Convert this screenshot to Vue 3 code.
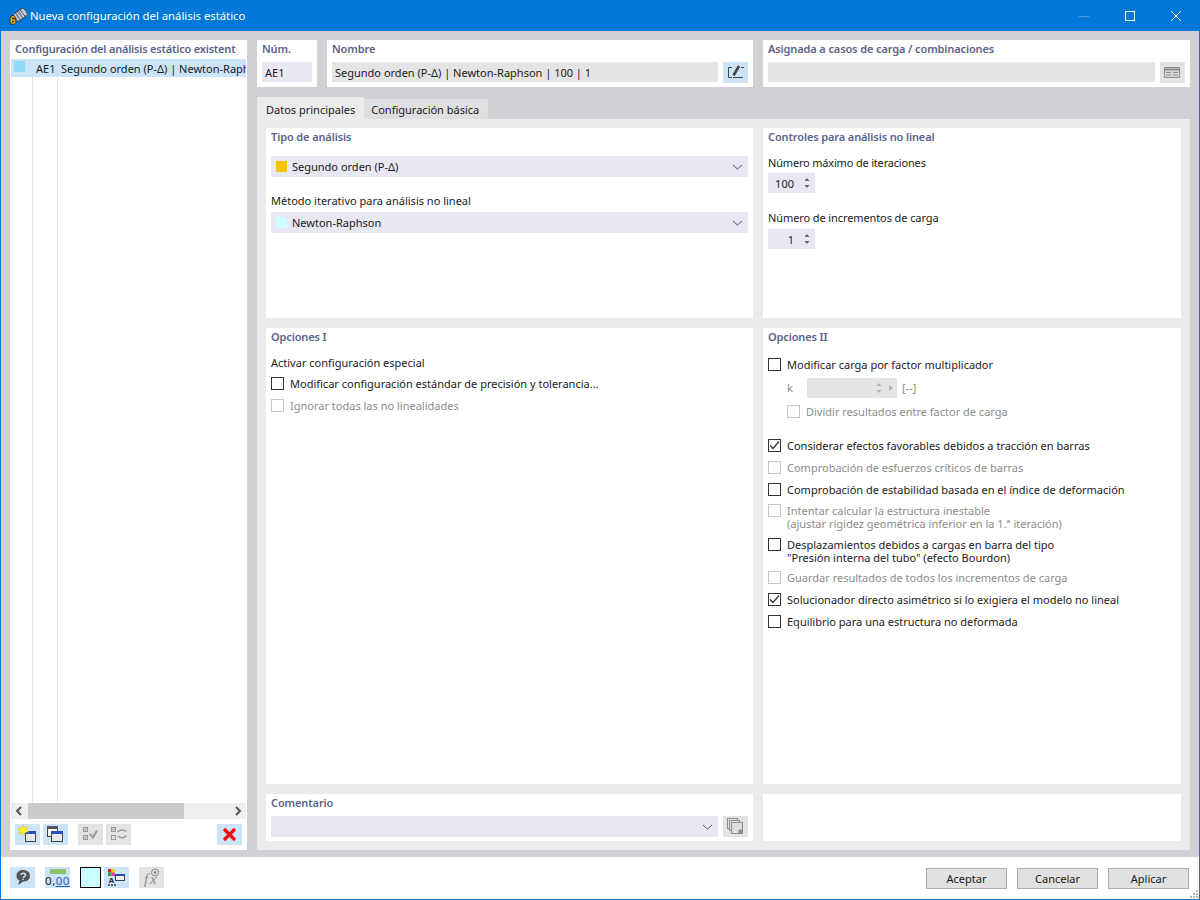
<template>
  <div class="window">
    <div class="titlebar">
      <svg class="app-icon" width="18" height="18" viewBox="0 0 18 18">
        <g transform="rotate(-35 11 8)">
          <rect x="4" y="3.500" width="14" height="9" rx="3.500" fill="#7f8694" stroke="#2f3340" stroke-width=".8" />
          <path d="M7 4V12M10 4V12M13 4V12" stroke="#dfe3ea" stroke-width="1" />
          <ellipse cx="16" cy="8" rx="2" ry="4.500" fill="#c9ced8" stroke="#2f3340" stroke-width=".6" />
        </g>
        <text class="six" x="1" y="16.500">6</text>
      </svg>
      <span class="title-text">Nueva configuración del análisis estático</span>
      <div class="win-btns">
        <svg width="12" height="12" viewBox="0 0 12 12"><path d="M1 6.500H11" stroke="#4d9fe0" /></svg>
        <svg width="12" height="12" viewBox="0 0 12 12"><rect x="1.500" y="1.500" width="9" height="9" fill="none" stroke="#fff" /></svg>
        <svg width="12" height="12" viewBox="0 0 12 12"><path d="M1 1L11 11M11 1L1 11" stroke="#fff" /></svg>
      </div>
    </div>

    <div class="body">
      <aside class="side">
        <div class="side-head">Configuración del análisis estático existent</div>
        <div class="tree">
          <div class="tree-row">
            <span class="tree-swatch"></span>
            <span class="tree-id">AE1</span>
            <span class="tree-name">Segundo orden (P-Δ) | Newton-Raph</span>
          </div>
        </div>
        <div class="scrollbar">
          <svg width="17" height="16" viewBox="0 0 17 16"><path d="M10 4L6 8L10 12" fill="none" stroke="#555" stroke-width="2" /></svg>
          <div class="scroll-track"><div class="scroll-thumb"></div></div>
          <svg width="17" height="16" viewBox="0 0 17 16"><path d="M7 4L11 8L7 12" fill="none" stroke="#555" stroke-width="2" /></svg>
        </div>
        <div class="side-tools">
          <button class="tool on">
            <svg width="25" height="21" viewBox="0 0 25 21">
              <rect x="10.500" y="7.500" width="10" height="10" fill="#e8e8e8" stroke="#444" />
              <rect x="10" y="7" width="11" height="3" fill="#2c4fc0" />
              <path d="M8 0.500L9.300 3.700L12.800 2.500L11 5.800L13.500 8L10 8.300L9 11.500L7.200 8.800L3.500 10L5 6.700L2.500 4.500L6 4.300Z" fill="#f6ee2c" stroke="#d6c400" stroke-width=".5" />
            </svg>
          </button>
          <button class="tool on">
            <svg width="25" height="21" viewBox="0 0 25 21">
              <rect x="4.500" y="2.500" width="10" height="10" fill="#f2f2f2" stroke="#444" />
              <rect x="4" y="2" width="11" height="3" fill="#555" />
              <rect x="8.500" y="7.500" width="11" height="10" fill="#e8e8e8" stroke="#444" />
              <rect x="8" y="7" width="12" height="3" fill="#2c4fc0" />
            </svg>
          </button>
          <button class="tool off gap-left">
            <svg width="25" height="21" viewBox="0 0 25 21" fill="none" stroke="#9a9a9a">
              <rect x="5.500" y="3.500" width="4" height="4" />
              <rect x="5.500" y="11.500" width="4" height="4" />
              <path d="M6 5L7.500 6.500L10 3M6 13L7.500 14.500L10 11" />
              <path d="M12 10L15 13.500L19 6.500" stroke-width="2" />
            </svg>
          </button>
          <button class="tool off">
            <svg width="25" height="21" viewBox="0 0 25 21" fill="none" stroke="#9a9a9a">
              <rect x="5.500" y="3.500" width="4" height="4" />
              <rect x="5.500" y="11.500" width="4" height="4" />
              <path d="M6 5L7.500 6.500L10 3" />
              <path d="M11.500 8C14 5.500 17.500 5.500 20.500 7.500M20.500 11.500C18 14.500 14.500 14.500 12 12" stroke-width="1.500" />
            </svg>
          </button>
          <button class="tool on push-right">
            <svg width="25" height="21" viewBox="0 0 25 21"><path d="M7 5L18 16M18 5L7 16" stroke="#ee1111" stroke-width="3.200" /></svg>
          </button>
        </div>
      </aside>

      <main class="content">
        <div class="top-row">
          <section class="card num-card">
            <h4>Núm.</h4>
            <div class="field lilac">AE1</div>
          </section>
          <section class="card name-card">
            <h4>Nombre</h4>
            <div class="with-btn">
              <div class="field grey grow">Segundo orden (P-Δ) | Newton-Raphson | 100 | 1</div>
              <button class="tool on small">
                <svg width="25" height="21" viewBox="0 0 25 21" fill="none" stroke="#444">
                  <path d="M9 5.500H5.500V15.500H9M10 15.500H20" />
                  <path d="M10.500 13.500L16 4" stroke-width="2.600" />
                  <path d="M18 5.500H21" />
                </svg>
              </button>
            </div>
          </section>
          <section class="card assign-card">
            <h4>Asignada a casos de carga / combinaciones</h4>
            <div class="with-btn">
              <div class="field grey grow"></div>
              <button class="tool off small">
                <svg width="25" height="21" viewBox="0 0 25 21" fill="none" stroke="#8e8e8e">
                  <rect x="4.500" y="5.500" width="15" height="10" fill="#d8d8d8" />
                  <path d="M5 7.500H19" stroke-width="2" />
                  <path d="M6 10.500H11M13 10.500H18M6 13H11M13 13H18" />
                </svg>
              </button>
            </div>
          </section>
        </div>

        <div class="tabs">
          <div class="tab active">Datos principales</div>
          <div class="tab idle">Configuración básica</div>
        </div>

        <div class="tab-page">
          <section class="card pane">
            <h4>Tipo de análisis</h4>
            <div class="select first-select">
              <span class="swatch" style="background: #f5c400"></span>
              <span class="grow">Segundo orden (P-Δ)</span>
              <svg class="chev" width="11" height="6" viewBox="0 0 11 6"><path d="M1 1L5.500 5L10 1" fill="none" stroke="#555" /></svg>
            </div>
            <label class="lab method-lab">Método iterativo para análisis no lineal</label>
            <div class="select">
              <span class="swatch" style="background: #ccffff"></span>
              <span class="grow">Newton-Raphson</span>
              <svg class="chev" width="11" height="6" viewBox="0 0 11 6"><path d="M1 1L5.500 5L10 1" fill="none" stroke="#555" /></svg>
            </div>
          </section>

          <section class="card pane">
            <h4>Controles para análisis no lineal</h4>
            <label class="lab first-lab">Número máximo de iteraciones</label>
            <div class="spin">
              <span class="grow">100</span>
              <svg width="8" height="14" viewBox="0 0 8 14"><path d="M4 2L6.500 5H1.500ZM4 12L6.500 9H1.500Z" fill="#666" /></svg>
            </div>
            <label class="lab second-lab">Número de incrementos de carga</label>
            <div class="spin">
              <span class="grow">1</span>
              <svg width="8" height="14" viewBox="0 0 8 14"><path d="M4 2L6.500 5H1.500ZM4 12L6.500 9H1.500Z" fill="#666" /></svg>
            </div>
          </section>

          <section class="card pane">
            <h4>Opciones I</h4>
            <label class="lab special-lab">Activar configuración especial</label>
            <div class="check-row" v-for="o in optionsOne" :key="o.text" :class="{ off: o.off }">
              <span class="box"></span>
              <span>{{ o.text }}</span>
            </div>
          </section>

          <section class="card pane">
            <h4>Opciones II</h4>
            <div class="opts">
              <div class="check-row"><span class="box"></span><span>Modificar carga por factor multiplicador</span></div>
              <div class="k-row off">
                <span class="k-label">k</span>
                <div class="k-input">
                  <svg width="22" height="14" viewBox="0 0 22 14">
                    <path d="M4 2L6.500 5H1.500ZM4 12L6.500 9H1.500Z" fill="#b5b5b5" />
                    <path d="M14 4L18 7L14 10Z" fill="#b5b5b5" />
                  </svg>
                </div>
                <span>[--]</span>
              </div>
              <div class="check-row off sub"><span class="box"></span><span>Dividir resultados entre factor de carga</span></div>
              <div
                v-for="o in optionsTwo"
                :key="o.text"
                class="check-row"
                :class="[o.row, { off: o.off }]"
              >
                <span class="box">
                  <svg v-if="o.checked" width="11" height="11" viewBox="0 0 11 11"><path d="M1 5.500L4 8.500L10 1.500" fill="none" stroke="#333" stroke-width="1.300" /></svg>
                </span>
                <span class="multi">{{ o.text }}</span>
              </div>
            </div>
          </section>

          <section class="card pane comment">
            <h4>Comentario</h4>
            <div class="with-btn">
              <div class="select grow">
                <span class="grow"></span>
                <svg class="chev" width="11" height="6" viewBox="0 0 11 6"><path d="M1 1L5.500 5L10 1" fill="none" stroke="#555" /></svg>
              </div>
              <button class="tool off small">
                <svg width="25" height="21" viewBox="0 0 25 21" fill="none" stroke="#8e8e8e">
                  <rect x="4.500" y="2.500" width="10" height="10" />
                  <rect x="6.500" y="4.500" width="10" height="10" fill="#e0e0e0" />
                  <rect x="8.500" y="6.500" width="11" height="11" fill="#e0e0e0" />
                  <rect x="16" y="14" width="3" height="3" fill="#8e8e8e" />
                </svg>
              </button>
            </div>
          </section>
          <section class="card pane comment"></section>
        </div>
      </main>
    </div>

    <footer class="footer">
      <button class="tool on foot-first">
        <svg width="25" height="21" viewBox="0 0 25 21">
          <path d="M13 3C17.500 3 20 5.500 20 9C20 12.500 17 14.500 13.500 14.500L8 18L9.500 13.500C7.500 12.500 6.500 11 6.500 9C6.500 5.500 9 3 13 3Z" fill="#555" />
          <path d="M11 7.800C11 5.800 15.500 5.800 15.500 8C15.500 9.800 13.200 9.500 13.200 11M13.200 11.800V13" fill="none" stroke="#cce4f8" stroke-width="1.500" />
        </svg>
      </button>
      <button class="tool on units">
        <span class="ruler"></span>
        <span class="units-num">0,<u>00</u></span>
      </button>
      <span class="color-box"></span>
      <button class="tool on legend">
        <svg width="25" height="21" viewBox="0 0 25 21">
          <rect x="4" y="2" width="3.500" height="3.500" fill="#e02020" />
          <rect x="7.500" y="2" width="3.500" height="3.500" fill="#e8d020" />
          <rect x="4" y="5.500" width="3.500" height="3.500" fill="#20a030" />
          <rect x="7.500" y="5.500" width="3.500" height="3.500" fill="#e040a0" />
          <rect x="11.500" y="7.500" width="9" height="6" fill="#f0f0f0" stroke="#444" />
          <rect x="11" y="7" width="10" height="2" fill="#2c4fc0" />
          <text class="legend-a" x="4.500" y="16">A</text>
          <path d="M4 18H12" stroke="#333" stroke-width="1.500" stroke-dasharray="2 1" />
        </svg>
      </button>
      <button class="tool off fx">
        <svg width="25" height="21" viewBox="0 0 25 21" fill="none" stroke="#8a8a8a">
          <text class="fx-text" x="5" y="17">f</text>
          <text class="fx-text" x="11" y="17">x</text>
          <circle cx="16" cy="5.500" r="3.500" />
          <circle cx="16" cy="5.500" r="1" fill="#8a8a8a" />
        </svg>
      </button>
      <div class="actions">
        <button class="act">Aceptar</button>
        <button class="act">Cancelar</button>
        <button class="act">Aplicar</button>
      </div>
      <svg class="grip" width="9" height="9" viewBox="0 0 9 9" fill="#b5b5b5">
        <rect x="6" y="0" width="2" height="2" />
        <rect x="3" y="3" width="2" height="2" />
        <rect x="6" y="3" width="2" height="2" />
        <rect x="0" y="6" width="2" height="2" />
        <rect x="3" y="6" width="2" height="2" />
        <rect x="6" y="6" width="2" height="2" />
      </svg>
    </footer>
  </div>
</template>

<script setup>
const optionsOne = [
  { text: "Modificar configuración estándar de precisión y tolerancia..." },
  { text: "Ignorar todas las no linealidades", off: true },
];

const optionsTwo = [
  { text: "Considerar efectos favorables debidos a tracción en barras", checked: true, row: "first" },
  { text: "Comprobación de esfuerzos críticos de barras", off: true },
  { text: "Comprobación de estabilidad basada en el índice de deformación" },
  { text: "Intentar calcular la estructura inestable\n(ajustar rigidez geométrica inferior en la 1.ª iteración)", off: true, row: "tall-a" },
  { text: "Desplazamientos debidos a cargas en barra del tipo\n\"Presión interna del tubo\" (efecto Bourdon)", row: "tall-b" },
  { text: "Guardar resultados de todos los incrementos de carga", off: true },
  { text: "Solucionador directo asimétrico si lo exigiera el modelo no lineal", checked: true },
  { text: "Equilibrio para una estructura no deformada" },
];
</script>

<style>
html,
body {
  margin: 0;
  background: #fff;
}
</style>

<style scoped>
.window {
  width: 1200px;
  height: 900px;
  box-sizing: border-box;
  border: 1px solid #0078d7;
  border-top: 0;
  display: flex;
  flex-direction: column;
  overflow: hidden;
  font-family: "Noto Sans", "Open Sans", sans-serif;
  font-size: 11px;
  color: #1a1a1a;
  background: #fff;
}

button {
  font-family: inherit;
  padding: 0;
  border: 0;
}

h4 {
  margin: 0;
  font-size: 11px;
  font-weight: 600;
  color: #5a6488;
  line-height: 15px;
  letter-spacing: -0.12px;
}

.titlebar {
  height: 31px;
  flex: none;
  background: #0078d7;
  color: #fff;
  display: flex;
  align-items: center;
  margin: 0 -1px;
  padding-left: 9px;
}

.app-icon {
  margin-right: 3px;
}

.six {
  font-family: "Liberation Sans", sans-serif;
  font-size: 10px;
  font-weight: 700;
  fill: #f5b800;
  stroke: #1c2a4a;
  stroke-width: 1.5px;
  paint-order: stroke;
}

.title-text {
  font-size: 11.3px;
}

.win-btns {
  margin-left: auto;
  display: flex;
  gap: 34px;
  padding-right: 18px;
}

.body {
  flex: 1;
  min-height: 0;
  background: #d1d0d5;
  display: flex;
  padding: 9px 9px 7px 9px;
  gap: 10px;
}

.side {
  width: 237px;
  flex: none;
  background: #fff;
  display: flex;
  flex-direction: column;
  padding-left: 1px;
  box-sizing: border-box;
}

.side-head {
  font-size: 11px;
  font-weight: 600;
  color: #5a6488;
  line-height: 15px;
  letter-spacing: -0.2px;
  padding: 1px 0 3px 4px;
  white-space: nowrap;
  overflow: hidden;
}

.tree {
  flex: 1;
  min-height: 0;
  margin-right: 1px;
  background: linear-gradient(#e6e6e6, #e6e6e6) 21px 0 / 1px 100% no-repeat,
    linear-gradient(#e6e6e6, #e6e6e6) 46px 0 / 1px 100% no-repeat;
  overflow: hidden;
}

.tree-row {
  height: 18px;
  display: flex;
  align-items: center;
  background: #cce4f8;
  white-space: nowrap;
  overflow: hidden;
}

.tree-swatch {
  width: 11px;
  height: 11px;
  margin: -3px 0 0 3px;
  background: #92d8f8;
  flex: none;
}

.tree-id {
  margin-left: 11px;
  width: 25px;
  flex: none;
}

.tree-name {
  flex: none;
}

.scrollbar {
  height: 16px;
  flex: none;
  margin-right: 1px;
  background: #eee;
  display: flex;
  align-items: center;
}

.scroll-track {
  flex: 1;
  height: 100%;
}

.scroll-thumb {
  width: 156px;
  height: 100%;
  background: #cbcbcb;
}

.side-tools {
  height: 31px;
  flex: none;
  display: flex;
  align-items: flex-start;
  gap: 3px;
  padding: 5px 5px 0 4px;
  box-sizing: border-box;
}

.tool {
  width: 25px;
  height: 21px;
  flex: none;
  display: block;
}

.tool svg {
  display: block;
}

.tool.on {
  background: #cce4f8;
}

.tool.off {
  background: #e3e3e3;
}

.gap-left {
  margin-left: 7px;
}

.push-right {
  margin-left: auto;
}

.content {
  flex: 1;
  min-width: 0;
  display: flex;
  flex-direction: column;
}

.top-row {
  height: 47px;
  flex: none;
  display: flex;
  gap: 10px;
}

.card {
  background: #fff;
  box-sizing: border-box;
}

.top-row .card {
  padding: 1px 5px 0;
}

.top-row h4 {
  margin-bottom: 6px;
}

.num-card {
  width: 60px;
}

.name-card {
  width: 426px;
}

.assign-card {
  flex: 1;
}

.field {
  height: 20px;
  line-height: 21px;
  padding-left: 3px;
  box-sizing: border-box;
  white-space: nowrap;
}

.lilac {
  background: #e8e8f2;
}

.grey {
  background: #e4e4e4;
}

.grow {
  flex: 1;
  min-width: 0;
}

.with-btn {
  display: flex;
  gap: 5px;
}

.tabs {
  height: 22px;
  margin-top: 10px;
  flex: none;
  display: flex;
}

.tab {
  padding: 0 9px;
  line-height: 25px;
  white-space: nowrap;
}

.tab.active {
  background: #ebebeb;
}

.tab.idle {
  margin-top: 2px;
  padding: 0 9px 0 7px;
  line-height: 21px;
  background: #dfdfe1;
}

.tab-page {
  flex: 1;
  min-height: 0;
  background: #ebebeb;
  display: grid;
  grid-template-columns: 487px 418px;
  grid-template-rows: 190px 456px 47px;
  gap: 10px;
  padding: 9px;
  box-sizing: border-box;
}

.pane {
  padding: 1px 5px 0;
}

.select {
  height: 21px;
  background: #e8e8f2;
  display: flex;
  align-items: center;
  padding: 0 5px;
}

.first-select {
  margin-top: 12px;
}

.swatch {
  width: 11px;
  height: 11px;
  margin-right: 5px;
  flex: none;
}

.lab {
  display: block;
  line-height: 15px;
}

.method-lab {
  margin-top: 16px;
  margin-bottom: 4px;
}

.first-lab {
  margin-top: 11px;
  margin-bottom: 3px;
  letter-spacing: -0.18px;
}

.second-lab {
  margin-top: 17px;
  margin-bottom: 4px;
  letter-spacing: -0.1px;
}

.special-lab {
  margin-top: 11px;
  margin-bottom: 2px;
}

.spin {
  width: 47px;
  height: 20px;
  background: #e8e8f2;
  display: flex;
  align-items: center;
  text-align: right;
  box-sizing: border-box;
  padding-right: 4px;
}

.spin span {
  padding-right: 9px;
}

.check-row {
  display: flex;
  align-items: center;
  height: 22px;
  gap: 6px;
  white-space: nowrap;
}

.check-row.off,
.k-row.off {
  color: #8c8c8c;
}

.box {
  width: 11px;
  height: 11px;
  border: 1px solid #333;
  background: #fff;
  flex: none;
  display: flex;
  align-items: center;
  justify-content: center;
}

.check-row.off .box {
  border-color: #c8c8c8;
}

.opts {
  margin-top: 9px;
}

.multi {
  white-space: pre;
  line-height: 13px;
}

.opts .first {
  margin-top: 12px;
}

.opts .tall-a,
.opts .tall-b {
  align-items: flex-start;
  padding-top: 4px;
  box-sizing: border-box;
}

.opts .tall-a {
  height: 34px;
}

.opts .tall-b {
  height: 32px;
}

.k-row {
  display: flex;
  align-items: center;
  height: 25px;
  padding-left: 19px;
}

.k-label {
  width: 20px;
}

.k-input {
  width: 90px;
  height: 20px;
  background: #e4e4e4;
  display: flex;
  align-items: center;
  justify-content: flex-end;
  margin-right: 5px;
}

.sub {
  padding-left: 19px;
}

.comment h4 {
  margin-bottom: 6px;
}

.footer {
  height: 42px;
  flex: none;
  display: flex;
  align-items: flex-start;
  padding: 10px 0 0 9px;
  box-sizing: border-box;
  position: relative;
}

.units {
  margin-left: 10px;
  display: flex;
  flex-direction: column;
  align-items: center;
}

.ruler {
  display: block;
  width: 16px;
  height: 5px;
  margin-top: 2px;
  background: #8fc36a;
}

.units-num {
  font-size: 11.5px;
  line-height: 14px;
  letter-spacing: 0.5px;
  color: #222;
}

.units-num u {
  color: #2c5fc0;
}

.color-box {
  width: 19px;
  height: 19px;
  margin-left: 10px;
  background: #ccffff;
  border: 1px solid #000;
  flex: none;
}

.legend {
  margin-left: 3px;
}

.legend-a {
  font-family: "Liberation Sans", sans-serif;
  font-size: 8px;
  font-weight: 700;
  fill: #222;
}

.fx {
  margin-left: 10px;
}

.fx-text {
  font-family: "Liberation Serif", serif;
  font-size: 15px;
  font-style: italic;
  fill: #8a8a8a;
  stroke: none;
}

.actions {
  margin-left: auto;
  margin-right: 10px;
  margin-top: 1px;
  display: flex;
  gap: 10px;
}

.act {
  width: 81px;
  height: 21px;
  background: #e1e1e1;
  border: 1px solid #adadad;
  box-sizing: border-box;
  font-size: 11px;
  color: #1a1a1a;
}

.grip {
  position: absolute;
  right: 0;
  bottom: 0;
}
</style>
